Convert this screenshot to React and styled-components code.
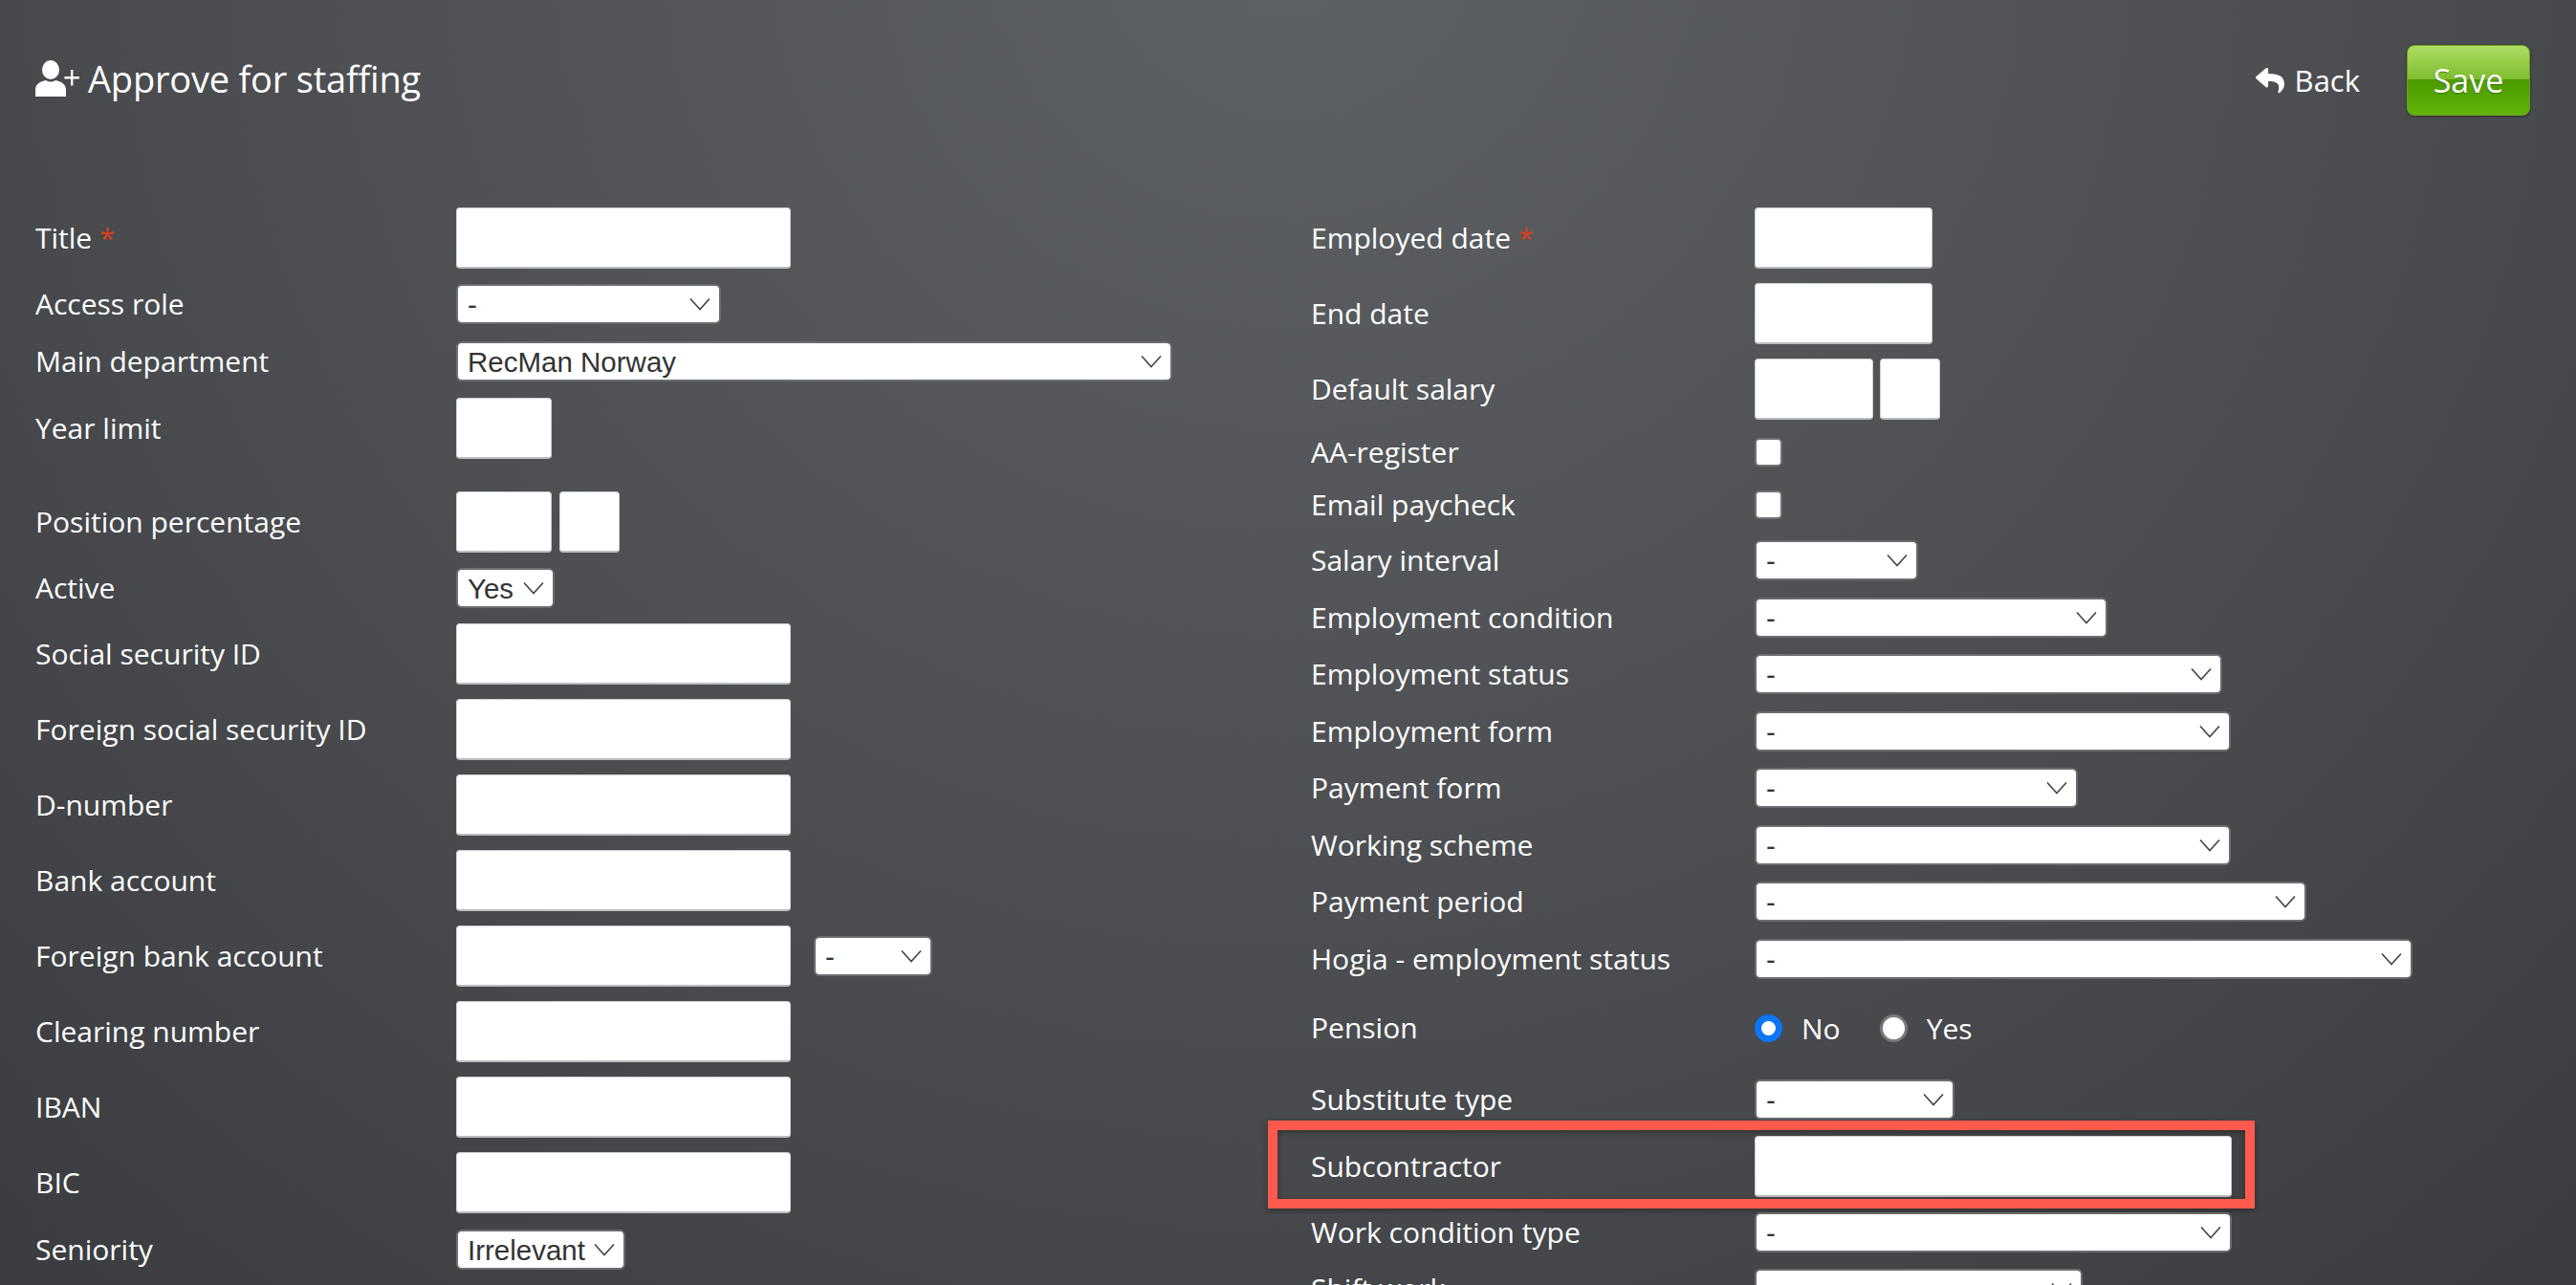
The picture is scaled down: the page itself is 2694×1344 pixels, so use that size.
import React from 'react';
import styled, { createGlobalStyle } from 'styled-components';
import { FaReply } from 'react-icons/fa';

const GlobalStyle = createGlobalStyle`
  html, body {
    margin: 0;
    padding: 0;
    height: 100%;
    overflow: hidden;
  }
`;

const chevron = `url("data:image/svg+xml,%3Csvg xmlns='http://www.w3.org/2000/svg' width='22' height='14' viewBox='0 0 22 14'%3E%3Cpath d='M1 1.5 L11 12.5 L21 1.5' fill='none' stroke='%23444' stroke-width='1.6'/%3E%3C/svg%3E")`;

const Page = styled.div`
  width: 2694px;
  height: 1344px;
  overflow: hidden;
  box-sizing: border-box;
  background: radial-gradient(ellipse 2000px 1900px at 50% -5%, #5f6265 0%, #4a4c4f 60%, #3a3c3f 100%);
  font-family: "Open Sans", sans-serif;
  color: #fff;
`;

const Header = styled.header`
  display: flex;
  justify-content: space-between;
  align-items: flex-start;
  box-sizing: border-box;
  height: 217px;
  padding: 47px 48px 0 37px;
`;

const Title = styled.h1`
  display: flex;
  align-items: center;
  gap: 9px;
  margin: 6px 0 0;
  font-size: 38px;
  line-height: 58px;
  font-weight: 400;
  letter-spacing: -0.2px;
`;

const Actions = styled.div`
  display: flex;
  align-items: center;
  gap: 49px;
`;

const BackLink = styled.a`
  display: flex;
  align-items: center;
  gap: 11px;
  font-size: 31px;
  color: #fff;
`;

const SaveButton = styled.button`
  box-sizing: border-box;
  width: 129px;
  height: 74px;
  padding: 0;
  border: 1px solid #6f9c1f;
  border-radius: 8px;
  background: linear-gradient(to bottom, #aedc63 0%, #7fbd30 48%, #4c9a00 49%, #5eb406 100%);
  box-shadow: 0 1px 3px rgba(0, 0, 0, 0.4);
  color: #fff;
  font-family: "Open Sans", sans-serif;
  font-size: 34px;
  text-shadow: 0 1px 1px rgba(40, 80, 0, 0.6);
`;

const Columns = styled.main`
  display: grid;
  grid-template-columns: 1334px 1fr;
  padding-left: 37px;
`;

const Column = styled.section`
  display: flex;
  flex-direction: column;
`;

const Row = styled.div`
  position: relative;
  display: flex;
  align-items: center;
  margin-bottom: ${p => p.$gap ?? 15}px;
`;

const Label = styled.label`
  flex: none;
  width: ${p => p.$width}px;
  font-size: 30px;
  line-height: 40px;
  white-space: nowrap;
`;

const Required = styled.span`
  color: #d8401f;
`;

const TextInput = styled.input`
  box-sizing: border-box;
  flex: none;
  width: ${p => p.$width}px;
  height: 64px;
  margin-right: ${p => p.$after ?? 0}px;
  border: 1px solid #cfcfcf;
  border-bottom: 2px solid #bdbdbd;
  border-radius: 4px;
  background: #fff;
`;

const Select = styled.select`
  box-sizing: border-box;
  flex: none;
  appearance: none;
  width: ${p => p.$width}px;
  height: 42px;
  margin-left: ${p => p.$before ?? 0}px;
  padding: 0 0 0 10px;
  border: 2px solid #6b6d70;
  border-radius: 6px;
  background: #fff ${chevron} no-repeat right 9px center;
  color: #333;
  font-family: "Liberation Sans", Arial, sans-serif;
  font-size: 29.5px;
`;

const Checkbox = styled.input.attrs({ type: 'checkbox' })`
  box-sizing: border-box;
  appearance: none;
  width: 29px;
  height: 30px;
  margin: 0;
  border: 2px solid #717375;
  border-radius: 5px;
  background: #fff;
`;

const RadioGroup = styled.div`
  display: flex;
  align-items: center;
  height: 40px;
  font-size: 30px;
`;

const Radio = styled.input.attrs({ type: 'radio' })`
  box-sizing: border-box;
  appearance: none;
  width: 29px;
  height: 29px;
  margin: 0 20px 0 0;
  border: 3px solid #77797b;
  border-radius: 50%;
  background: #fff;
  &:checked {
    border: 7px solid #0b76f6;
  }
`;

const RadioText = styled.span`
  margin-right: ${p => p.$after ?? 0}px;
`;

const Highlight = styled.div`
  position: absolute;
  top: -16px;
  left: -45px;
  box-sizing: border-box;
  width: 1032px;
  height: 92px;
  border: 10px solid #ff5a4d;
  box-shadow: 0 2px 6px rgba(0, 0, 0, 0.35), inset 0 2px 6px rgba(0, 0, 0, 0.35);
  pointer-events: none;
`;

const UserPlusIcon = () => (
  <svg width="46" height="38" viewBox="0 0 46 38" fill="#fff" aria-hidden="true">
    <ellipse cx="16" cy="10" rx="9" ry="10" />
    <path d="M0 38 V31 C0 25 5 22 11 21 Q16 24 21 21 C27 22 32 25 32 31 V38 Z" />
    <path d="M37 10 h2.4 v7 h6.6 v2.4 h-6.6 v7 h-2.4 v-7 h-6.6 v-2.4 h6.6 Z" />
  </svg>
);

const Drop = ({ value = '-', ...rest }) => (
  <Select defaultValue={value} {...rest}>
    <option value={value}>{value}</option>
  </Select>
);

const LEFT = 440;
const RIGHT = 464;

const App = () => (
  <Page>
    <GlobalStyle />
    <Header>
      <Title><UserPlusIcon /> Approve for staffing</Title>
      <Actions>
        <BackLink><FaReply size={30} /> Back</BackLink>
        <SaveButton>Save</SaveButton>
      </Actions>
    </Header>
    <Columns>
      <Column>
        <Row $gap={16}><Label $width={LEFT}>Title<Required> *</Required></Label><TextInput $width={350} /></Row>
        <Row $gap={18}><Label $width={LEFT}>Access role</Label><Drop $width={277} /></Row>
        <Row $gap={17}><Label $width={LEFT}>Main department</Label><Drop $width={749} value="RecMan Norway" /></Row>
        <Row $gap={34}><Label $width={LEFT}>Year limit</Label><TextInput $width={100} /></Row>
        <Row $gap={16}><Label $width={LEFT}>Position percentage</Label><TextInput $width={100} $after={8} /><TextInput $width={63} /></Row>
        <Row $gap={16}><Label $width={LEFT}>Active</Label><Drop $width={103} value="Yes" /></Row>
        <Row><Label $width={LEFT}>Social security ID</Label><TextInput $width={350} /></Row>
        <Row><Label $width={LEFT}>Foreign social security ID</Label><TextInput $width={350} /></Row>
        <Row><Label $width={LEFT}>D-number</Label><TextInput $width={350} /></Row>
        <Row><Label $width={LEFT}>Bank account</Label><TextInput $width={350} /></Row>
        <Row><Label $width={LEFT}>Foreign bank account</Label><TextInput $width={350} /><Drop $width={124} $before={24} /></Row>
        <Row><Label $width={LEFT}>Clearing number</Label><TextInput $width={350} /></Row>
        <Row><Label $width={LEFT}>IBAN</Label><TextInput $width={350} /></Row>
        <Row $gap={17}><Label $width={LEFT}>BIC</Label><TextInput $width={350} /></Row>
        <Row><Label $width={LEFT}>Seniority</Label><Drop $width={177} value="Irrelevant" /></Row>
      </Column>
      <Column>
        <Row><Label $width={RIGHT}>Employed date<Required> *</Required></Label><TextInput $width={186} /></Row>
        <Row><Label $width={RIGHT}>End date</Label><TextInput $width={186} /></Row>
        <Row $gap={14}><Label $width={RIGHT}>Default salary</Label><TextInput $width={124} $after={7} /><TextInput $width={63} /></Row>
        <Row $gap={15}><Label $width={RIGHT}>AA-register</Label><Checkbox /></Row>
        <Row $gap={17}><Label $width={RIGHT}>Email paycheck</Label><Checkbox /></Row>
        <Row $gap={18}><Label $width={RIGHT}>Salary interval</Label><Drop $width={171} /></Row>
        <Row $gap={17}><Label $width={RIGHT}>Employment condition</Label><Drop $width={369} /></Row>
        <Row $gap={18}><Label $width={RIGHT}>Employment status</Label><Drop $width={489} /></Row>
        <Row $gap={17}><Label $width={RIGHT}>Employment form</Label><Drop $width={498} /></Row>
        <Row $gap={18}><Label $width={RIGHT}>Payment form</Label><Drop $width={338} /></Row>
        <Row $gap={17}><Label $width={RIGHT}>Working scheme</Label><Drop $width={498} /></Row>
        <Row $gap={18}><Label $width={RIGHT}>Payment period</Label><Drop $width={577} /></Row>
        <Row $gap={31}><Label $width={RIGHT}>Hogia - employment status</Label><Drop $width={688} /></Row>
        <Row $gap={34}>
          <Label $width={RIGHT}>Pension</Label>
          <RadioGroup>
            <Radio name="pension" defaultChecked />
            <RadioText $after={41}>No</RadioText>
            <Radio name="pension" />
            <RadioText>Yes</RadioText>
          </RadioGroup>
        </Row>
        <Row $gap={17}><Label $width={RIGHT}>Substitute type</Label><Drop $width={209} /></Row>
        <Row $gap={16}>
          <Label $width={RIGHT}>Subcontractor</Label>
          <TextInput $width={499} />
          <Highlight />
        </Row>
        <Row $gap={17}><Label $width={RIGHT}>Work condition type</Label><Drop $width={499} /></Row>
        <Row><Label $width={RIGHT}>Shift work</Label><Drop $width={343} /></Row>
      </Column>
    </Columns>
  </Page>
);

export default App;
